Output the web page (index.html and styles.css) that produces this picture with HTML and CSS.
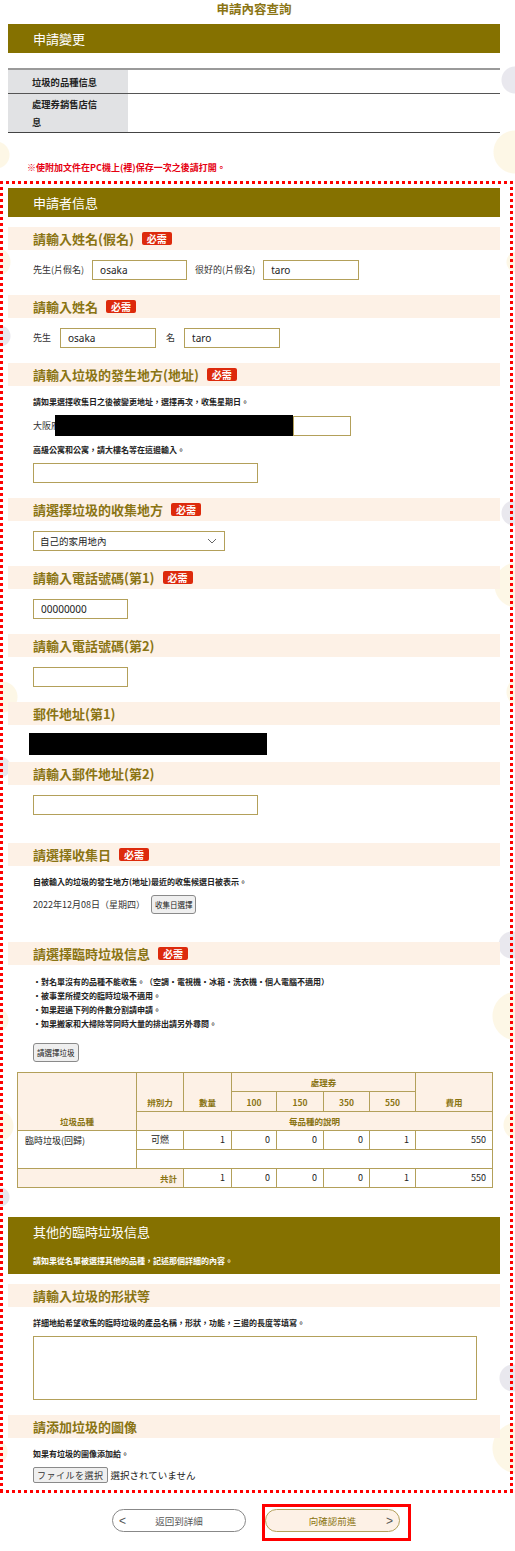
FILE: index.html
```html
<!DOCTYPE html>
<html lang="zh-Hant">
<head>
    <meta charset="UTF-8">
    <meta name="viewport" content="width=device-width, initial-scale=1.0">
    <title>申請內容查詢</title>
    <link rel="stylesheet" href="styles.css">
</head>
<body>
    <div class="page">
        <h1 class="page-title">申請內容查詢</h1>
        <h2 class="bar">申請變更</h2>

        <table class="info-table">
            <tr class="row-short">
                <th>垃圾的品種信息</th>
                <td></td>
            </tr>
            <tr class="row-tall">
                <th>處理券銷售店信息</th>
                <td></td>
            </tr>
        </table>

        <p class="warn">※使附加文件在PC機上(裡)保存一次之後請打開。</p>

        <div class="form-box">
            <h2 class="bar">申請者信息</h2>

            <section class="field first">
                <h3 class="field-head">請輸入姓名(假名) <span class="req">必需</span></h3>
                <div class="field-body row">
                    <span class="label">先生(片假名)</span>
                    <input class="text-input w95" type="text" value="osaka">
                    <span class="label">很好的(片假名)</span>
                    <input class="text-input w96" type="text" value="taro">
                </div>
            </section>

            <section class="field">
                <h3 class="field-head">請輸入姓名 <span class="req">必需</span></h3>
                <div class="field-body row wide">
                    <span class="label">先生</span>
                    <input class="text-input w96" type="text" value="osaka">
                    <span class="label">名</span>
                    <input class="text-input w96" type="text" value="taro">
                </div>
            </section>

            <section class="field">
                <h3 class="field-head">請輸入垃圾的發生地方(地址) <span class="req">必需</span></h3>
                <div class="field-body">
                    <p class="note">請如果選擇收集日之後被變更地址，選擇再次，收集星期日。</p>
                    <div class="row">
                        <span class="label">大阪府</span>
                        <span class="redact addr"></span>
                        <input class="text-input w58" type="text">
                    </div>
                    <p class="note after-row">高級公寓和公寓，請大樓名等在這邊輸入。</p>
                    <input class="text-input w225" type="text">
                </div>
            </section>

            <section class="field">
                <h3 class="field-head">請選擇垃圾的收集地方 <span class="req">必需</span></h3>
                <div class="field-body">
                    <div class="select">
                        <span>自己的家用地內</span>
                        <svg width="10" height="6" viewBox="0 0 10 6"><path d="M1 1 L5 5 L9 1" fill="none" stroke="#666" stroke-width="1"/></svg>
                    </div>
                </div>
            </section>

            <section class="field">
                <h3 class="field-head">請輸入電話號碼(第1) <span class="req">必需</span></h3>
                <div class="field-body">
                    <input class="text-input w95" type="text" value="00000000">
                </div>
            </section>

            <section class="field">
                <h3 class="field-head">請輸入電話號碼(第2)</h3>
                <div class="field-body">
                    <input class="text-input w95" type="text">
                </div>
            </section>

            <section class="field">
                <h3 class="field-head">郵件地址(第1)</h3>
                <div class="field-body tight">
                    <span class="redact mail"></span>
                </div>
            </section>

            <section class="field gap-sm">
                <h3 class="field-head">請輸入郵件地址(第2)</h3>
                <div class="field-body">
                    <input class="text-input w225" type="text">
                </div>
            </section>

            <section class="field gap-lg">
                <h3 class="field-head">請選擇收集日 <span class="req">必需</span></h3>
                <div class="field-body">
                    <p class="note">自被輸入的垃圾的發生地方(地址)最近的收集候選日被表示。</p>
                    <div class="row">
                        <span class="label date">2022年12月08日（星期四）</span>
                        <button class="small-btn" type="button">收集日選擇</button>
                    </div>
                </div>
            </section>

            <section class="field gap-lg">
                <h3 class="field-head">請選擇臨時垃圾信息 <span class="req">必需</span></h3>
                <div class="field-body">
                    <ul class="bullets">
                        <li>・對名單沒有的品種不能收集。（空調・電視機・冰箱・洗衣機・個人電腦不適用）</li>
                        <li>・被事業所提交的臨時垃圾不適用。</li>
                        <li>・如果超過下列的件數分割請申請。</li>
                        <li>・如果搬家和大掃除等同時大量的排出請另外尋問。</li>
                    </ul>
                    <button class="small-btn" type="button">請選擇垃圾</button>
                </div>
                <table class="waste-table">
                    <colgroup>
                        <col style="width:119px">
                        <col style="width:47px">
                        <col style="width:48px">
                        <col style="width:45px">
                        <col style="width:47px">
                        <col style="width:46px">
                        <col style="width:46px">
                        <col style="width:77px">
                    </colgroup>
                    <tr class="h19">
                        <th rowspan="3" class="bottom">垃圾品種</th>
                        <th rowspan="2" class="bottom">辨別力</th>
                        <th rowspan="2" class="bottom">數量</th>
                        <th colspan="4">處理券</th>
                        <th rowspan="2" class="bottom">費用</th>
                    </tr>
                    <tr class="h20">
                        <th>100</th>
                        <th>150</th>
                        <th>350</th>
                        <th>550</th>
                    </tr>
                    <tr class="h19">
                        <th colspan="7">每品種的說明</th>
                    </tr>
                    <tr class="h19">
                        <td rowspan="2" class="name">臨時垃圾(回歸)</td>
                        <td class="center">可燃</td>
                        <td>1</td>
                        <td>0</td>
                        <td>0</td>
                        <td>0</td>
                        <td>1</td>
                        <td>550</td>
                    </tr>
                    <tr class="h19">
                        <td colspan="7"></td>
                    </tr>
                    <tr class="h19">
                        <th colspan="2" class="right">共計</th>
                        <td>1</td>
                        <td>0</td>
                        <td>0</td>
                        <td>0</td>
                        <td>1</td>
                        <td>550</td>
                    </tr>
                </table>
            </section>

            <div class="bar bar-tall">
                <h2>其他的臨時垃圾信息</h2>
                <p>請如果從名單被選擇其他的品種，記述那個詳細的內容。</p>
            </div>

            <section class="field first">
                <h3 class="field-head">請輸入垃圾的形狀等</h3>
                <div class="field-body">
                    <p class="note">詳細地給希望收集的臨時垃圾的產品名稱，形狀，功能，三邊的長度等填寫。</p>
                    <textarea class="text-area"></textarea>
                </div>
            </section>

            <section class="field">
                <h3 class="field-head">請添加垃圾的圖像</h3>
                <div class="field-body">
                    <p class="note">如果有垃圾的圖像添加給。</p>
                    <div class="row">
                        <button class="file-btn" type="button">ファイルを選択</button>
                        <span class="file-name">選択されていません</span>
                    </div>
                </div>
            </section>
        </div>

        <div class="actions">
            <button class="pill back" type="button"><span class="arrow">&lt;</span><span>返回到詳細</span><span></span></button>
            <div class="focus-frame">
                <button class="pill forward" type="button"><span></span><span>向確認前進</span><span class="arrow">&gt;</span></button>
            </div>
        </div>
    </div>
</body>
</html>
```

FILE: styles.css
```css
body {
    margin: 0;
    min-height: 1551px;
    font-family: "Noto Sans CJK JP", "Noto Sans", sans-serif;
    color: #222;
    background-color: #fff;
    background-image:
        radial-gradient(circle at 515px 152px, #fdf7e6 21px, transparent 22px),
        radial-gradient(circle at -4px 155px, #fdf7e6 13px, transparent 14px),
        radial-gradient(circle at -4px 262px, #fdf7e6 14px, transparent 15px),
        radial-gradient(circle at 517px 262px, #fdf7e6 10px, transparent 11px),
        radial-gradient(circle at 517px 585px, #fdf7e6 22px, transparent 23px),
        radial-gradient(circle at 2px 697px, #fdf7e6 15px, transparent 16px),
        radial-gradient(circle at 521px 692px, #fdf7e6 14px, transparent 15px),
        radial-gradient(circle at 517px 1016px, #fdf7e6 24px, transparent 25px),
        radial-gradient(circle at -4px 1020px, #fdf7e6 12px, transparent 13px),
        radial-gradient(circle at -2px 1126px, #fdf7e6 15px, transparent 16px),
        radial-gradient(circle at 518px 1125px, #fdf7e6 14px, transparent 15px),
        radial-gradient(circle at 518px 1448px, #fdf7e6 25px, transparent 26px),
        radial-gradient(circle at -5px 1452px, #fdf7e6 12px, transparent 13px),
        radial-gradient(circle at 515px 80px, #e9e8ee 13px, transparent 14px),
        radial-gradient(circle at 0 336px, #e9e8ee 10px, transparent 11px),
        radial-gradient(circle at 514px 513px, #e9e8ee 12px, transparent 13px),
        radial-gradient(circle at 0 767px, #e9e8ee 10px, transparent 11px),
        radial-gradient(circle at 512px 945px, #e9e8ee 13px, transparent 14px),
        radial-gradient(circle at 0 1197px, #e9e8ee 9px, transparent 10px),
        radial-gradient(circle at 513px 1378px, #e9e8ee 13px, transparent 14px);
    background-repeat: no-repeat;
}

.page {
    width: 492px;
    margin-left: 8px;
}

.page-title {
    margin: 0 0 6px;
    font-size: 12.5px;
    line-height: 18px;
    text-align: center;
    font-weight: bold;
    color: #8a7413;
}

/* olive title bars */
.bar {
    box-sizing: border-box;
    margin: 0;
    height: 29px;
    padding-left: 25px;
    background-color: #857100;
    color: #fff;
    font-size: 13px;
    font-weight: normal;
    line-height: 29px;
}

.bar-tall {
    height: auto;
    margin-top: 29px;
    padding: 8px 25px 7px;
    line-height: normal;
}

.bar-tall h2 {
    margin: 0;
    font-size: 13px;
    font-weight: normal;
    line-height: 14px;
}

.bar-tall p {
    margin: 16px 0 0;
    font-size: 8px;
    font-weight: bold;
    line-height: 12px;
}

/* top info table */
.info-table {
    width: 100%;
    margin-top: 15px;
    border-collapse: collapse;
    border-top: 2px solid #9a9a9a;
    border-bottom: 1px solid #444;
}

.info-table th {
    width: 120px;
    box-sizing: border-box;
    padding: 0 26px 0 24px;
    background-color: #e1e2e4;
    text-align: left;
    font-size: 9.3px;
    line-height: 18px;
    font-weight: bold;
}

.info-table td {
    padding: 0;
    background-color: #fff;
}

.info-table .row-short th,
.info-table .row-short td {
    height: 23px;
}

.info-table .row-tall th,
.info-table .row-tall td {
    height: 38px;
    border-top: 1px solid #555;
}

.warn {
    margin: 29px 0 0;
    padding-left: 19px;
    font-size: 9px;
    line-height: 12px;
    font-weight: bold;
    color: #e60012;
}

/* dotted red frame */
.form-box {
    margin: 7px -13px 0 -8px;
    padding: 7px 13px 10px 8px;
    background:
        repeating-linear-gradient(to right, #f00 0 3px, transparent 3px 6px) left top / 100% 3px no-repeat,
        repeating-linear-gradient(to right, #f00 0 3px, transparent 3px 6px) left bottom / 100% 3px no-repeat,
        repeating-linear-gradient(to bottom, #f00 0 3px, transparent 3px 6px) left top / 3px 100% no-repeat,
        repeating-linear-gradient(to bottom, #f00 0 3px, transparent 3px 6px) right top / 3px 100% no-repeat;
}

.field {
    margin-top: 15px;
}

.field.first {
    margin-top: 10px;
}

.field.gap-sm {
    margin-top: 7px;
}

.field.gap-lg {
    margin-top: 28px;
}

.field-head {
    display: flex;
    align-items: center;
    gap: 8px;
    margin: 0;
    height: 23px;
    padding-left: 25px;
    background-color: #fdf1e6;
    color: #8a7413;
    font-size: 13px;
    font-weight: bold;
    line-height: 23px;
}

.req {
    padding: 0 5px;
    border-radius: 2px;
    background-color: #dd2a0c;
    color: #fff;
    font-size: 10px;
    line-height: 13px;
}

.field-body {
    margin-top: 10px;
    padding-left: 25px;
}

.field-body.tight {
    margin-top: 8px;
    padding-left: 21px;
}

.row {
    display: flex;
    align-items: center;
}

.label {
    margin-right: 8px;
    font-size: 9px;
    line-height: 14px;
    color: #333;
}

.row .text-input + .label {
    margin-left: 8px;
}

.row.wide .label {
    margin-right: 9px;
}

.row.wide .text-input + .label {
    margin-left: 10px;
}

.label.date {
    margin-right: 6px;
}

.note {
    margin: 0 0 7px;
    font-size: 8px;
    font-weight: bold;
    line-height: 12px;
}

.field-body > .note:first-child {
    margin-top: 2px;
}

.note.after-row {
    margin-top: 8px;
}

.text-input {
    box-sizing: border-box;
    display: block;
    height: 20px;
    padding: 0 7px;
    border: 1px solid #b3a05a;
    background-color: #fff;
    font-family: "Noto Sans", "Noto Sans CJK JP", sans-serif;
    font-size: 10px;
    color: #222;
}

.w95 { width: 95px; }
.w96 { width: 96px; }
.w58 { width: 58px; }
.w225 { width: 225px; }

.redact {
    display: block;
    background-color: #000;
}

.redact.addr {
    width: 238px;
    height: 21px;
    margin-left: -13px;
}

.redact.mail {
    width: 238px;
    height: 22px;
}

.select {
    box-sizing: border-box;
    display: flex;
    justify-content: space-between;
    align-items: center;
    width: 192px;
    height: 20px;
    padding: 0 7px 0 6px;
    border: 1px solid #b3a05a;
    font-size: 9.5px;
}

.small-btn {
    box-sizing: border-box;
    height: 19px;
    padding: 0 3px;
    border: 1px solid #8a8a8a;
    border-radius: 3px;
    background-color: #efefef;
    font-family: "Noto Sans CJK JP", sans-serif;
    font-size: 7.5px;
    color: #222;
}

.bullets {
    list-style: none;
    margin: 1px 0 6px;
    padding: 0;
    font-size: 8px;
    font-weight: bold;
    line-height: 14px;
}

/* waste table */
.waste-table {
    width: 475px;
    margin: 10px 0 0 9px;
    table-layout: fixed;
    border-collapse: collapse;
    font-size: 9px;
}

.waste-table th,
.waste-table td {
    padding: 0 6px;
    border: 1px solid #b3a05a;
    line-height: 12px;
}

.waste-table th {
    background-color: #fdf1e6;
    color: #8a7413;
    font-size: 8.5px;
    font-weight: bold;
    text-align: center;
}

.waste-table th.bottom {
    vertical-align: bottom;
    padding-bottom: 3px;
}

.waste-table th.right {
    text-align: right;
}

.waste-table td {
    text-align: right;
    background-color: #fff;
}

.waste-table td.name {
    text-align: left;
    vertical-align: top;
    padding: 4px 6px 0 7px;
}

.waste-table td.center {
    text-align: center;
}

.waste-table .h19 > * { height: 18px; }
.waste-table .h20 > * { height: 19px; }

.text-area {
    box-sizing: border-box;
    display: block;
    width: 444px;
    height: 64px;
    border: 1px solid #b3a05a;
    resize: none;
}

.file-btn {
    box-sizing: border-box;
    height: 16px;
    padding: 0 3px;
    border: 1px solid #8a8a8a;
    border-radius: 2px;
    background-color: #efefef;
    font-family: "Noto Sans CJK JP", sans-serif;
    font-size: 9px;
    color: #333;
    letter-spacing: 0.5px;
}

.file-name {
    margin-left: 3px;
    font-size: 9.5px;
    color: #222;
}

/* bottom buttons */
.actions {
    display: flex;
    align-items: flex-start;
    margin-top: 11px;
    padding-left: 104px;
}

.pill {
    box-sizing: border-box;
    display: grid;
    grid-template-columns: 1fr auto 1fr;
    align-items: center;
    height: 23px;
    padding: 0 6px;
    border-radius: 12px;
    font-family: "Noto Sans CJK JP", sans-serif;
    font-size: 9.5px;
}

.pill .arrow {
    font-family: "Liberation Sans", sans-serif;
    font-size: 12px;
}

.pill.back {
    width: 134px;
    margin-top: 5px;
    border: 1px solid #888;
    background-color: #fff;
    color: #555;
}

.pill.back .arrow {
    justify-self: start;
}

.pill.forward {
    width: 135px;
    border: 1px solid #b3a05a;
    background-color: #fdf1e6;
    color: #8a7413;
}

.pill.forward .arrow {
    justify-self: end;
    color: #555;
}

.focus-frame {
    margin-left: 16px;
    padding: 2px 8px 6px 0;
    border: 3px solid #f00;
}
```
